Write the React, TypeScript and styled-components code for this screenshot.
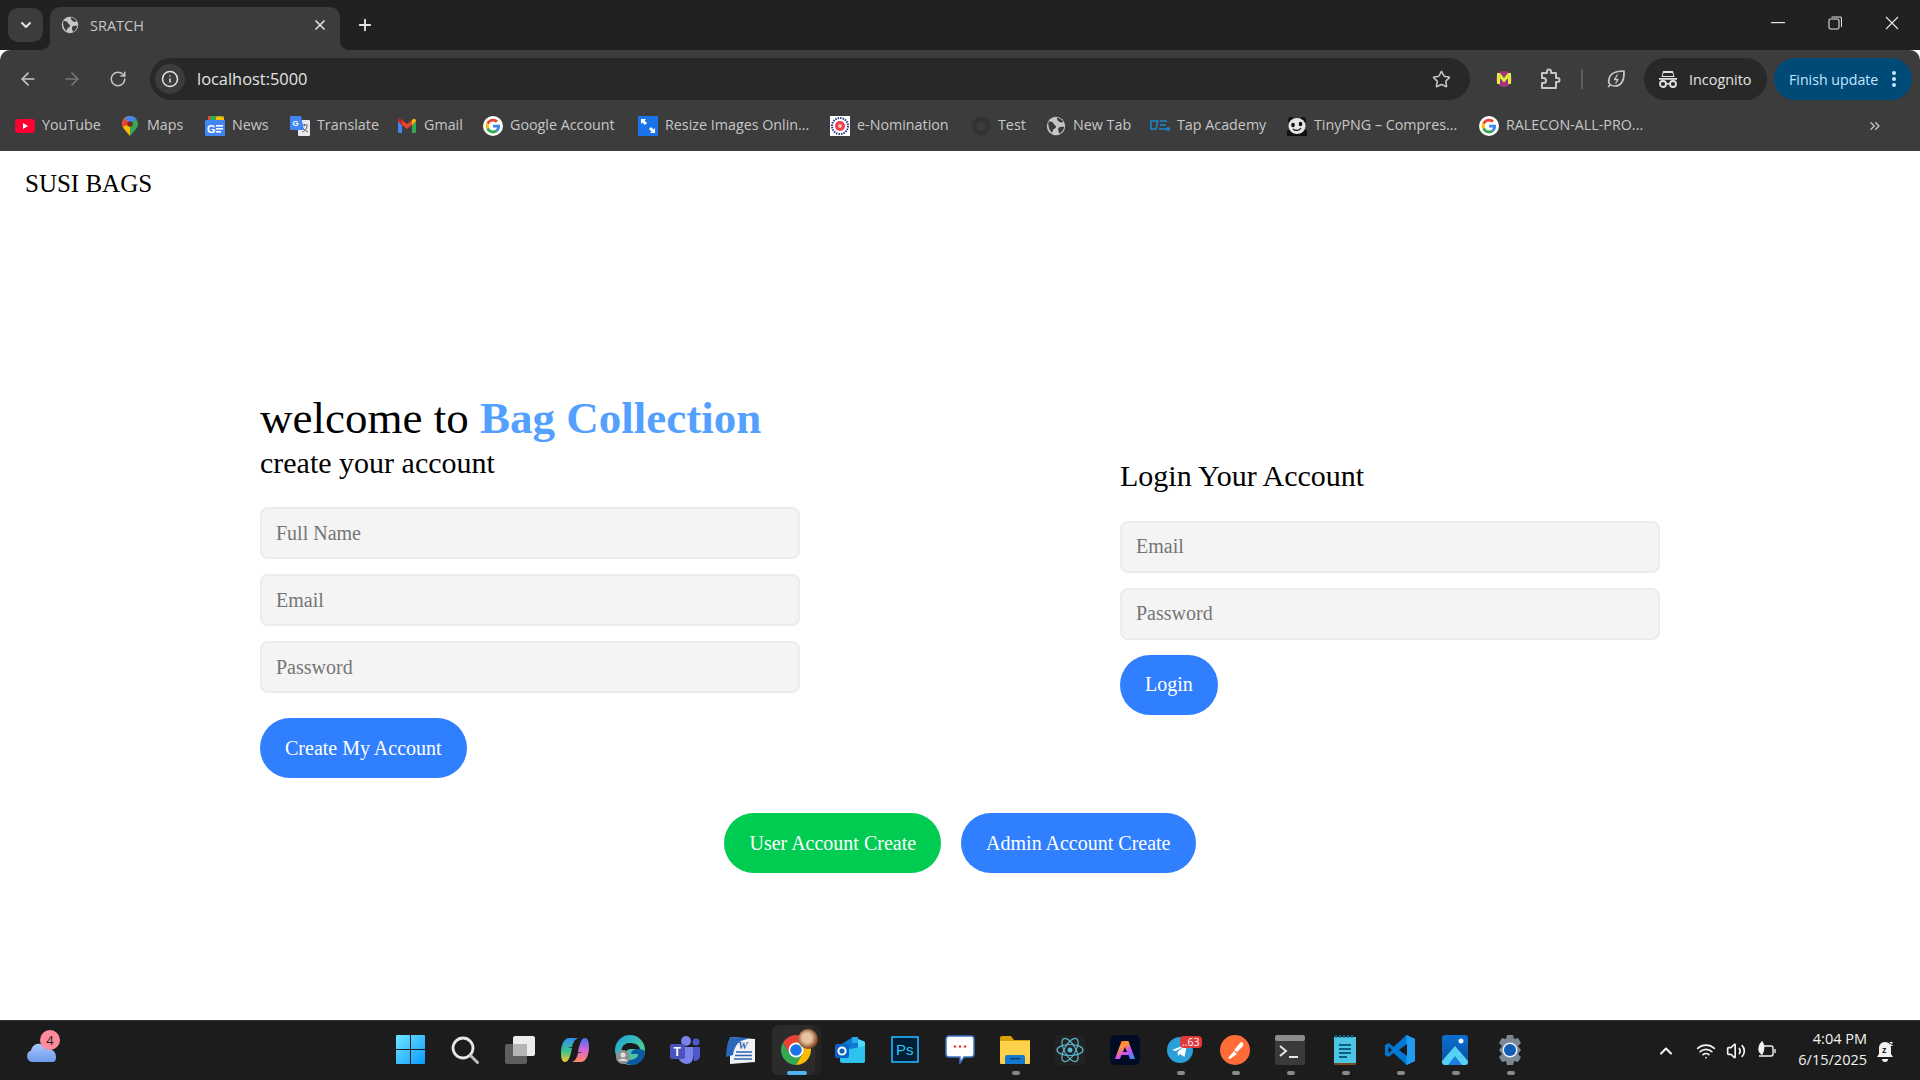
import React from "react";
import styled, { createGlobalStyle } from "styled-components";
import {
  ArrowLeft,
  ArrowRight,
  ChevronDown,
  ChevronUp,
  ChevronsRight,
  Info,
  Plus,
  RotateCw,
  Star,
  Volume2,
  Wifi,
  X,
} from "lucide-react";

const UI_FONT = `"Open Sans", "Noto Sans", sans-serif`;
const PAGE_FONT = `"Liberation Serif", "Times New Roman", serif`;

const GlobalStyle = createGlobalStyle`
  html, body {
    margin: 0;
    padding: 0;
    height: 100%;
    overflow: hidden;
    background: #fff;
  }
  * { box-sizing: border-box; }
`;

/* ---------- drawn icons ---------- */

const GlobeIcon = ({ size = 18, color = "#c4c7c5", land = "#3c3c3c" }: { size?: number; color?: string; land?: string }) => (
  <svg width={size} height={size} viewBox="0 0 24 24">
    <circle cx="12" cy="12" r="11" fill={color} />
    <path d="M3 7c3-1 5 0 6 2s3 2 3 4-2 2-3 3-1 4-2 4C4 17 2 12 3 7z" fill={land} />
    <path d="M13 2c3 0 6 2 8 5-2 1-4 1-5 0s-3-2-3-5zM15 14c2-1 5-1 7-1-1 4-3 7-6 8-1-2-2-5-1-7z" fill={land} />
  </svg>
);

const GoogleIcon = () => (
  <svg width="20" height="20" viewBox="0 0 60 60">
    <circle cx="30" cy="30" r="30" fill="#fff" />
    <g transform="translate(8 8) scale(0.92)">
      <path fill="#EA4335" d="M24 9.5c3.54 0 6.71 1.22 9.21 3.6l6.85-6.85C35.9 2.38 30.47 0 24 0 14.62 0 6.51 5.38 2.56 13.22l7.98 6.19C12.43 13.72 17.74 9.5 24 9.5z" />
      <path fill="#4285F4" d="M46.98 24.55c0-1.57-.15-3.09-.38-4.55H24v9.02h12.94c-.58 2.96-2.26 5.48-4.78 7.18l7.73 6c4.51-4.18 7.09-10.36 7.09-17.65z" />
      <path fill="#FBBC05" d="M10.53 28.59c-.48-1.45-.76-2.99-.76-4.59s.27-3.14.76-4.59l-7.98-6.19C.92 16.46 0 20.12 0 24c0 3.88.92 7.54 2.56 10.78l7.97-6.19z" />
      <path fill="#34A853" d="M24 48c6.48 0 11.93-2.13 15.89-5.81l-7.73-6c-2.15 1.45-4.92 2.3-8.16 2.3-6.26 0-11.57-4.22-13.47-9.91l-7.98 6.19C6.51 42.62 14.62 48 24 48z" />
    </g>
  </svg>
);

const YoutubeIcon = () => (
  <svg width="20" height="14" viewBox="0 0 20 14">
    <rect width="20" height="14" rx="3.5" fill="#ff0033" />
    <path d="M8 4l5 3-5 3z" fill="#fff" />
  </svg>
);

const MapsIcon = () => (
  <svg width="16" height="20" viewBox="0 0 16 20">
    <path d="M8 0a8 8 0 0 1 8 8c0 2-1 3.500-2 5l-6 7z" fill="#34a853" />
    <path d="M8 0a8 8 0 0 0-8 8c0 2 1 3.500 2 5l6 7V0z" fill="#fbbc04" />
    <path d="M2.500 2.500A8 8 0 0 1 8 0c2.500 0 4.500 1 6 3L8 8z" fill="#4285f4" />
    <path d="M2.500 2.500A8 8 0 0 0 0 8c0 1 .3 2 .7 3L8 8z" fill="#ea4335" />
    <circle cx="8" cy="8" r="2.800" fill="#7a2a1a" />
  </svg>
);

const NewsIcon = () => (
  <svg width="20" height="20" viewBox="0 0 20 20">
    <rect x="3" y="0" width="14" height="6" rx="1" fill="#ea4335" />
    <rect x="5" y="0" width="13" height="5" rx="1" fill="#34a853" />
    <rect x="11" y="0.500" width="8" height="5" rx="1" fill="#fbbc04" />
    <rect y="4" width="20" height="16" rx="1" fill="#4285f4" />
    <text x="2" y="16.500" fontFamily="Liberation Sans, sans-serif" fontWeight="700" fontSize="11" fill="#fff">G</text>
    <rect x="11" y="9" width="7" height="1.600" fill="#fff" />
    <rect x="11" y="12" width="7" height="1.600" fill="#fff" />
    <rect x="11" y="15" width="5" height="1.600" fill="#fff" />
  </svg>
);

const TranslateIcon = () => (
  <svg width="20" height="20" viewBox="0 0 20 20">
    <rect x="8" y="4" width="12" height="16" rx="1" fill="#e8eaed" />
    <path d="M11 9h7M14.500 8v2M12.500 16c3-1 4-3 4.500-6M13 12c1 2 3 3 5 4" stroke="#5f6368" strokeWidth="1" fill="none" />
    <path d="M1 0h10l3 14H1a1 1 0 0 1-1-1V1a1 1 0 0 1 1-1z" fill="#4285f4" />
    <text x="2.500" y="10" fontFamily="Liberation Sans, sans-serif" fontWeight="700" fontSize="8" fill="#fff">G</text>
  </svg>
);

const GmailIcon = () => (
  <svg width="18" height="14" viewBox="0 0 18 14">
    <path d="M0 2v10.500A1.500 1.500 0 0 0 1.500 14H4V6z" fill="#4285f4" />
    <path d="M14 6v8h2.500a1.500 1.500 0 0 0 1.500-1.500V2z" fill="#34a853" />
    <path d="M0 2c0-2 2-2.500 3.200-1.500L9 5l5.800-4.500C16-.5 18 0 18 2l-4 4-5 4-5-4z" fill="#ea4335" />
    <path d="M14 .9l.8-.4C16-.5 18 0 18 2l-4 4z" fill="#fbbc04" />
    <path d="M0 2c0-2 2-2.500 3.200-1.500L4 1.100V6z" fill="#c5221f" />
  </svg>
);

const ResizeIcon = () => (
  <svg width="20" height="20" viewBox="0 0 20 20">
    <rect width="20" height="20" fill="#1a73e8" />
    <path d="M3 3h5l-1.500 1.500L9 7 7 9 4.500 6.500 3 8zM17 17h-5l1.500-1.500L11 13l2-2 2.500 2.500L17 12z" fill="#fff" />
  </svg>
);

const NominationIcon = () => (
  <svg width="20" height="20" viewBox="0 0 20 20">
    <rect width="20" height="20" fill="#fff" />
    <circle cx="10" cy="10" r="8" fill="none" stroke="#27348b" strokeWidth="2" strokeDasharray="1.500 1" />
    <circle cx="10" cy="10" r="5" fill="#e8414a" />
    <circle cx="10" cy="10" r="2" fill="#f7b5b5" />
  </svg>
);

const TestIcon = () => (
  <svg width="20" height="20" viewBox="0 0 20 20">
    <circle cx="10" cy="10" r="7" fill="none" stroke="#333" strokeWidth="5" />
  </svg>
);

const TapIcon = () => (
  <svg width="20" height="12" viewBox="0 0 20 12" fill="none" stroke="#1a86d0" strokeWidth="1.600">
    <path d="M1 1h7L6 9H1zM10 1h7M10 5h6M9 9h7" />
    <circle cx="18" cy="9" r="1.300" />
  </svg>
);

const PandaIcon = () => (
  <svg width="20" height="20" viewBox="0 0 20 20">
    <rect y="14" width="20" height="6" fill="#111" />
    <circle cx="4" cy="4" r="3" fill="#111" />
    <circle cx="16" cy="4" r="3" fill="#111" />
    <ellipse cx="10" cy="10" rx="8.500" ry="8" fill="#e6e6e6" />
    <ellipse cx="6" cy="9" rx="1.800" ry="2.200" fill="#111" />
    <ellipse cx="13.500" cy="8" rx="1.800" ry="2.200" fill="#111" />
    <path d="M6 13c2 2 6 2 8-1" stroke="#111" strokeWidth="1.300" fill="none" />
  </svg>
);

const MBadgeIcon = () => (
  <svg width="18" height="18" viewBox="0 0 18 18">
    <circle cx="9" cy="9" r="8" fill="#a8327f" />
    <path d="M2 14V3h3l4 5 4-5h3v11h-3V8l-4 4.500L5 8v6z" fill="#d6f03c" />
  </svg>
);

const PuzzleIcon = () => (
  <svg width="22" height="22" viewBox="0 0 22 22" fill="none" stroke="#c4c7c5" strokeWidth="2" strokeLinejoin="round">
    <path d="M3 5h5V3.500a2 2 0 0 1 4 0V5h5v5h1.500a2 2 0 0 1 0 4H17v6H3v-5h1.500a2.500 2.500 0 0 0 0-5H3z" />
  </svg>
);

const LeafIcon = () => (
  <svg width="20" height="20" viewBox="0 0 20 20" fill="none" stroke="#c4c7c5" strokeWidth="1.700" strokeLinejoin="round">
    <path d="M18 2C18.500 10 16 17 9 17 7 17 5 16.500 4 15.500 2.500 14 2.500 12 3 10 4 4 11 2 18 2Z" />
    <path d="M4 16l-2 2" />
    <path d="M11.500 5.500l-3 5h3.500l-2.500 4" strokeWidth="1.300" />
  </svg>
);

const IncognitoIcon = () => (
  <svg width="20" height="20" viewBox="0 0 20 20" fill="#e3e3e3">
    <path d="M5 2h10l1.500 6h-13zM1 9h18v1.700H1z" />
    <path d="M5.500 4h9l.8 3H4.700z" fill="#282828" />
    <circle cx="5" cy="15" r="3" fill="none" stroke="#e3e3e3" strokeWidth="1.800" />
    <circle cx="15" cy="15" r="3" fill="none" stroke="#e3e3e3" strokeWidth="1.800" />
    <rect x="7.500" y="14" width="5" height="1.600" />
  </svg>
);

const MinimizeIcon = () => (
  <svg width="14" height="2" viewBox="0 0 14 2">
    <rect width="14" height="1.200" fill="#e3e3e3" />
  </svg>
);

const RestoreIcon = () => (
  <svg width="14" height="14" viewBox="0 0 14 14" fill="none" stroke="#e3e3e3" strokeWidth="1.100">
    <rect x="1" y="3" width="10" height="10" rx="1.500" />
    <path d="M3.500 1H12a1.500 1.500 0 0 1 1.500 1.500V11" />
  </svg>
);

const CloseIcon = () => (
  <svg width="14" height="14" viewBox="0 0 14 14" stroke="#e3e3e3" strokeWidth="1.200">
    <path d="M1 1l12 12M13 1L1 13" />
  </svg>
);

const MoreIcon = () => (
  <svg width="4" height="18" viewBox="0 0 4 18" fill="#c2e7ff">
    <circle cx="2" cy="3" r="2" />
    <circle cx="2" cy="9" r="2" />
    <circle cx="2" cy="15" r="2" />
  </svg>
);

/* taskbar */

const CloudIcon = () => (
  <svg width="30" height="20" viewBox="0 0 30 20">
    <defs>
      <linearGradient id="cloud" x1="0" y1="0" x2="0" y2="1">
        <stop offset="0" stopColor="#a8c8ff" />
        <stop offset="1" stopColor="#6d9aea" />
      </linearGradient>
    </defs>
    <path d="M6 20a6 6 0 0 1-1-11.500C6 4 10 1 14 2c3 .7 5 3 6 5 5-1 10 2 10 8 0 3-1 5-3 5z" fill="url(#cloud)" />
  </svg>
);

const WindowsIcon = () => (
  <svg width="29" height="29" viewBox="0 0 29 29">
    <defs>
      <linearGradient id="win" x1="0" y1="0" x2="1" y2="1">
        <stop offset="0" stopColor="#6fe6ff" />
        <stop offset="1" stopColor="#0a9bff" />
      </linearGradient>
    </defs>
    <path d="M0 1a1 1 0 0 1 1-1h13v14H0zM15 0h13a1 1 0 0 1 1 1v13H15zM0 15h14v14H1a1 1 0 0 1-1-1zM15 15h14v13a1 1 0 0 1-1 1H15z" fill="url(#win)" />
  </svg>
);

const SearchIcon = () => (
  <svg width="28" height="28" viewBox="0 0 28 28" fill="none" stroke="#e6e6e6" strokeLinecap="round">
    <circle cx="12" cy="12" r="10" strokeWidth="2.800" />
    <path d="M20 20l6.500 6.500" strokeWidth="3" stroke="#bdbdbd" />
  </svg>
);

const TaskViewIcon = () => (
  <svg width="30" height="28" viewBox="0 0 30 28">
    <rect y="8" width="22" height="20" rx="2" fill="#5e5e5e" />
    <rect x="8" width="22" height="20" rx="2" fill="#ececec" />
    <rect x="8" y="8" width="14" height="12" fill="#b5b5b5" />
  </svg>
);

const CopilotIcon = () => (
  <svg width="28" height="26" viewBox="0 0 28 26">
    <defs>
      <linearGradient id="copA" x1="0" y1="0" x2="0" y2="1">
        <stop offset="0" stopColor="#2f8cf5" />
        <stop offset="0.550" stopColor="#3cc28a" />
        <stop offset="1" stopColor="#f8c92e" />
      </linearGradient>
      <linearGradient id="copB" x1="0" y1="0" x2="0" y2="1">
        <stop offset="0" stopColor="#3f76f0" />
        <stop offset="0.500" stopColor="#d665d8" />
        <stop offset="1" stopColor="#ff8a5c" />
      </linearGradient>
    </defs>
    <path d="M8 1h9c-3 1-5 4-6 9H6l5 1c-1 6-3 14-7 14-3 0-4-4-4-9C0 8 3 1 8 1z" fill="url(#copA)" />
    <path d="M20 25h-9c3-1 5-4 6-9h5l-5-1c1-6 3-14 7-14 3 0 4 4 4 9 0 8-3 15-8 15z" fill="url(#copB)" />
  </svg>
);

const EdgeIcon = () => (
  <svg width="30" height="30" viewBox="0 0 30 30">
    <defs>
      <linearGradient id="edgeA" x1="0" y1="0" x2="1" y2="1">
        <stop offset="0" stopColor="#1da0e0" />
        <stop offset="1" stopColor="#5fe07a" />
      </linearGradient>
    </defs>
    <circle cx="15" cy="15" r="15" fill="url(#edgeA)" />
    <path d="M30 17c0 7-6 13-13 13-5 0-9-3-10-7 3 2 8 3 12 1 3-1 4-3 4-5h-7c0-3 3-5 7-5s7 1 7 3z" fill="#0c59a4" />
    <path d="M15 8c5 0 9 2 10 6h-9c-4 0-6 3-6 6-3-2-4-5-3-7 1-3 4-5 8-5z" fill="#1b1b1b" />
    <circle cx="8" cy="22" r="7" fill="#8f8f8f" />
    <circle cx="8" cy="20" r="2.500" fill="#e0e0e0" />
    <path d="M3.500 26c1-3 8-3 9 0z" fill="#e0e0e0" />
  </svg>
);

const TeamsIcon = () => (
  <svg width="30" height="28" viewBox="0 0 30 28">
    <circle cx="16" cy="5" r="5" fill="#7b83eb" />
    <circle cx="26" cy="6" r="3.500" fill="#5059c9" />
    <path d="M22 11h8v9c0 3-3 5-6 5z" fill="#5059c9" />
    <path d="M8 11h15v11a6 6 0 0 1-6 6c-5 0-9-4-9-8z" fill="#7b83eb" />
    <rect y="8" width="15" height="15" rx="2" fill="#4b53bc" />
    <text x="3.500" y="20" fontFamily="Liberation Sans, sans-serif" fontWeight="700" fontSize="12" fill="#fff">T</text>
  </svg>
);

const WordIcon = () => (
  <svg width="29" height="28" viewBox="0 0 29 28">
    <path d="M4 1l25 2v23L4 28z" fill="#f2f2f2" />
    <path d="M4 1c-3 6-4 14-4 20l7-2c1-6 3-11 8-14l9-3z" fill="#2b66b8" />
    <text x="12" y="13" fontFamily="Liberation Serif, serif" fontStyle="italic" fontWeight="700" fontSize="11" fill="#2b66b8">W</text>
    <path d="M10 16h16M9 19.500h17M8 23h18" stroke="#2b66b8" strokeWidth="1.400" />
  </svg>
);

const ChromeIcon = () => (
  <svg width="30" height="30" viewBox="2 2 44 44">
    <path fill="#ea4335" d="M24 13H43.050A22 22 0 0 0 4.950 13L14.470 29.500L24 24Z" />
    <path fill="#34a853" d="M14.470 29.500L4.950 13A22 22 0 0 0 24 46L33.530 29.500L24 24Z" />
    <path fill="#fbbc04" d="M33.530 29.500L24 46A22 22 0 0 0 43.050 13H24L24 24Z" />
    <circle cx="24" cy="24" r="11" fill="#fff" />
    <circle cx="24" cy="24" r="8.500" fill="#1a73e8" />
  </svg>
);

const OutlookIcon = () => (
  <svg width="30" height="26" viewBox="0 0 30 26">
    <path d="M5 8l13-8 10 4a2 2 0 0 1 2 2v18a2 2 0 0 1-2 2H8a2 2 0 0 1-3-2z" fill="#0f78d4" />
    <path d="M17 0h6v6h-6z" fill="#28a8ea" />
    <path d="M23 2l5 2a2 2 0 0 1 2 2v5h-7z" fill="#50d9ff" />
    <path d="M5 14l25-5v15a2 2 0 0 1-2 2H8a3 3 0 0 1-3-2z" fill="#2cc4ee" />
    <rect y="7" width="14" height="14" rx="2" fill="#0a64c8" />
    <circle cx="7" cy="14" r="3.600" fill="none" stroke="#fff" strokeWidth="2" />
  </svg>
);

const PhotoshopIcon = () => (
  <svg width="28" height="27" viewBox="0 0 28 27">
    <rect x="1" y="1" width="26" height="25" fill="#001e36" stroke="#1fb6ff" strokeWidth="1.600" />
    <text x="5" y="19" fontFamily="Liberation Sans, sans-serif" fontSize="15" fill="#31c5f4">Ps</text>
  </svg>
);

const FeedbackIcon = () => (
  <svg width="30" height="29" viewBox="0 0 30 29">
    <path d="M4 1h22a3 3 0 0 1 3 3v15a3 3 0 0 1-3 3h-7l-4 6v-6H4a3 3 0 0 1-3-3V4a3 3 0 0 1 3-3z" fill="#fff" stroke="#3a76c4" strokeWidth="1.500" />
    <circle cx="10" cy="11.500" r="1.300" fill="#e23b3b" />
    <circle cx="15" cy="11.500" r="1.300" fill="#e23b3b" />
    <circle cx="20" cy="11.500" r="1.300" fill="#e23b3b" />
  </svg>
);

const FolderIcon = () => (
  <svg width="30" height="28" viewBox="0 0 30 28">
    <path d="M0 2a2 2 0 0 1 2-2h9l3 4h16v4H0z" fill="#d9a107" />
    <path d="M0 5h30v22a1 1 0 0 1-1 1H1a1 1 0 0 1-1-1z" fill="#fdd24b" />
    <path d="M5 21a2 2 0 0 1 2-2h16a2 2 0 0 1 2 2v7H5z" fill="#1578d1" />
    <rect x="10" y="22" width="10" height="1.400" fill="#0a3f75" />
  </svg>
);

const ReactIcon = () => (
  <svg width="30" height="30" viewBox="0 0 30 30">
    <rect width="30" height="30" rx="3" fill="#222" />
    <g fill="none" stroke="#5bb8cf" strokeWidth="1.200">
      <ellipse cx="15" cy="15" rx="13" ry="5.500" />
      <ellipse cx="15" cy="15" rx="13" ry="5.500" transform="rotate(60 15 15)" />
      <ellipse cx="15" cy="15" rx="13" ry="5.500" transform="rotate(120 15 15)" />
    </g>
    <circle cx="15" cy="15" r="2.500" fill="#5bb8cf" />
  </svg>
);

const AdobeIcon = () => (
  <svg width="30" height="30" viewBox="0 0 30 30">
    <defs>
      <linearGradient id="adobe" x1="0" y1="0" x2="0.800" y2="1">
        <stop offset="0" stopColor="#ff3b3b" />
        <stop offset="0.350" stopColor="#ff9a2e" />
        <stop offset="0.650" stopColor="#d94cf0" />
        <stop offset="1" stopColor="#3c8cf5" />
      </linearGradient>
    </defs>
    <rect width="30" height="30" rx="5" fill="#000c24" />
    <path d="M11.500 6h7l6.500 18h-5l-1.500-4h-7l-1.500 4H5zM15 12l-2 5h4z" fill="url(#adobe)" fillRule="evenodd" />
  </svg>
);

const TelegramIcon = () => (
  <svg width="26" height="26" viewBox="0 0 26 26">
    <circle cx="13" cy="13" r="13" fill="#2a9fd8" />
    <path d="M5 13l15-6-2.500 13-4.500-3-2 2-.5-4 6-5-8 4z" fill="#fff" />
  </svg>
);

const PostmanIcon = () => (
  <svg width="30" height="30" viewBox="0 0 30 30">
    <circle cx="15" cy="15" r="15" fill="#ff6c37" />
    <path d="M8 23l6-7 3 3-7 5zM14 15l7-8c2 0 3 2 2 4l-6 6z" fill="#fff" />
  </svg>
);

const TerminalIcon = () => (
  <svg width="30" height="30" viewBox="0 0 30 30">
    <rect width="30" height="30" rx="3" fill="#3a3a3a" />
    <rect width="30" height="6" rx="2" fill="#8c8c8c" />
    <path d="M5 11l6 5-6 5" fill="none" stroke="#e6e6e6" strokeWidth="2" />
    <rect x="14" y="21" width="9" height="2" fill="#e6e6e6" />
  </svg>
);

const NotepadIcon = () => (
  <svg width="22" height="30" viewBox="0 0 22 30">
    <rect y="2" width="22" height="28" rx="1" fill="#7a4a22" />
    <rect y="2" width="22" height="26" fill="#4dc6e6" />
    <path d="M2 0v3M6 0v3M10 0v3M14 0v3M18 0v3" stroke="#0f7fa8" strokeWidth="1.500" />
    <path d="M5 10h12M5 14h12M5 18h12M5 22h8" stroke="#0b5f80" strokeWidth="2" />
  </svg>
);

const VsCodeIcon = () => (
  <svg width="30" height="30" viewBox="0 0 30 30">
    <path d="M21.500 0L30 4v22l-8.500 4-13-12-5 4L0 20v-10l3.500-2 5 4z" fill="#0078d4" />
    <path d="M21.500 0L30 4v22l-8.500 4z" fill="#1f9cf0" />
    <path d="M22 9l-8 6 8 6z" fill="#1b1b1b" />
    <path d="M3.500 11.500v7L7 15z" fill="#1b1b1b" />
  </svg>
);

const PhotosIcon = () => (
  <svg width="26" height="30" viewBox="0 0 26 30">
    <defs>
      <linearGradient id="photos" x1="0" y1="0" x2="0" y2="1">
        <stop offset="0" stopColor="#0c6fd0" />
        <stop offset="1" stopColor="#0a4d9c" />
      </linearGradient>
    </defs>
    <rect width="26" height="30" rx="3" fill="url(#photos)" />
    <circle cx="19" cy="6" r="2.500" fill="#e8f4ff" />
    <path d="M0 26l13-15 13 15v1a3 3 0 0 1-3 3H3a3 3 0 0 1-3-3z" fill="#57d0f5" />
    <path d="M6 30l7-9 7 9z" fill="#1a7fdc" />
  </svg>
);

const SettingsIcon = () => (
  <svg width="30" height="30" viewBox="0 0 30 30">
    <path d="M12 0h6l1 4 4-1 3 5-3 3 3 4-3 4 3 3-3 5-4-1-1 4h-6l-1-4-4 1-3-5 3-3-3-4 3-4-3-3 3-5 4 1z" fill="#7c8893" />
    <circle cx="15" cy="15" r="7.500" fill="#e8eef5" />
    <circle cx="15" cy="15" r="6" fill="#0f5cb5" />
  </svg>
);

const BatteryLeafIcon = () => (
  <svg width="20" height="20" viewBox="0 0 20 20" fill="none" stroke="#f2f2f2" strokeWidth="1.400">
    <path d="M8 5h7a2 2 0 0 1 2 2v6a2 2 0 0 1-2 2H3" />
    <path d="M19 8v4" />
    <path d="M6 1c2 3 3 6 0 12C2 11 2 5 6 1z" fill="#f2f2f2" />
  </svg>
);

const BellIcon = () => (
  <svg width="20" height="24" viewBox="0 0 20 24">
    <path d="M9 3c-4 0-6 3-6 6v6l-2 3h16l-2-3V9c0-3-2-6-6-6z" fill="#f2f2f2" />
    <path d="M6 20h6a3 3 0 0 1-6 0z" fill="#f2f2f2" />
    <text x="6" y="14" fontFamily="Liberation Sans, sans-serif" fontWeight="700" fontSize="9" fill="#1c1c1c">z</text>
    <text x="13" y="7" fontFamily="Liberation Sans, sans-serif" fontWeight="700" fontSize="8" fill="#f2f2f2">z</text>
  </svg>
);

/* ---------- data ---------- */

const bookmarks = [
  { label: "YouTube", width: 56, icon: <YoutubeIcon /> },
  { label: "Maps", width: 36, icon: <MapsIcon /> },
  { label: "News", width: 36, icon: <NewsIcon /> },
  { label: "Translate", width: 58, icon: <TranslateIcon /> },
  { label: "Gmail", width: 37, icon: <GmailIcon /> },
  { label: "Google Account", width: 106, icon: <GoogleIcon /> },
  { label: "Resize Images Onlin...", width: 143, icon: <ResizeIcon /> },
  { label: "e-Nomination", width: 92, icon: <NominationIcon /> },
  { label: "Test", width: 26, icon: <TestIcon /> },
  { label: "New Tab", width: 55, icon: <GlobeIcon size={20} /> },
  { label: "Tap Academy", width: 88, icon: <TapIcon /> },
  { label: "TinyPNG – Compres...", width: 143, icon: <PandaIcon /> },
  { label: "RALECON-ALL-PRO...", width: 141, icon: <GoogleIcon /> },
];

const taskbarApps = [
  { id: "start", icon: <WindowsIcon /> },
  { id: "search", icon: <SearchIcon /> },
  { id: "taskview", icon: <TaskViewIcon /> },
  { id: "copilot", icon: <CopilotIcon /> },
  { id: "edge", icon: <EdgeIcon /> },
  { id: "teams", icon: <TeamsIcon /> },
  { id: "word", icon: <WordIcon /> },
  { id: "chrome", icon: <ChromeIcon />, active: true },
  { id: "outlook", icon: <OutlookIcon /> },
  { id: "photoshop", icon: <PhotoshopIcon /> },
  { id: "feedback", icon: <FeedbackIcon /> },
  { id: "files", icon: <FolderIcon />, running: true },
  { id: "react", icon: <ReactIcon /> },
  { id: "adobe", icon: <AdobeIcon /> },
  { id: "telegram", icon: <TelegramIcon />, running: true, badge: "..63" },
  { id: "postman", icon: <PostmanIcon />, running: true },
  { id: "terminal", icon: <TerminalIcon />, running: true },
  { id: "notepad", icon: <NotepadIcon />, running: true },
  { id: "vscode", icon: <VsCodeIcon />, running: true },
  { id: "photos", icon: <PhotosIcon />, running: true },
  { id: "settings", icon: <SettingsIcon />, running: true },
];

/* ---------- app ---------- */

const App: React.FC = () => (
  <>
    <GlobalStyle />
    <Screen>
      <TabStrip>
        <TabSwitcher>
          <ChevronDown size={16} strokeWidth={3} color="#e3e3e3" />
        </TabSwitcher>
        <Tab>
          <GlobeIcon />
          <TabTitle>SRATCH</TabTitle>
          <X size={16} strokeWidth={2.5} color="#e3e3e3" />
        </Tab>
        <NewTab>
          <Plus size={18} strokeWidth={2.5} color="#e3e3e3" />
        </NewTab>
        <WindowControls>
          <WindowButton><MinimizeIcon /></WindowButton>
          <WindowButton><RestoreIcon /></WindowButton>
          <WindowButton><CloseIcon /></WindowButton>
        </WindowControls>
      </TabStrip>

      <Toolbar>
        <NavButton><ArrowLeft size={20} color="#c4c7c5" /></NavButton>
        <NavButton><ArrowRight size={20} color="#757575" /></NavButton>
        <NavButton $shift><RotateCw size={18} color="#c4c7c5" /></NavButton>
        <Omnibox>
          <SiteInfo><Info size={18} color="#e3e3e3" /></SiteInfo>
          <Address>localhost:5000</Address>
          <Star size={19} color="#c4c7c5" />
        </Omnibox>
        <ToolSlot $lead><MBadgeIcon /></ToolSlot>
        <ToolSlot><PuzzleIcon /></ToolSlot>
        <ToolDivider />
        <ToolSlot><LeafIcon /></ToolSlot>
        <IncognitoChip>
          <IncognitoIcon />
          Incognito
        </IncognitoChip>
        <UpdateChip>
          Finish update
          <MoreIcon />
        </UpdateChip>
      </Toolbar>

      <BookmarksBar>
        {bookmarks.map((b) => (
          <Bookmark key={b.label}>
            <BookmarkIcon>{b.icon}</BookmarkIcon>
            <BookmarkLabel $width={b.width}>{b.label}</BookmarkLabel>
          </Bookmark>
        ))}
        <BookmarksMore>
          <ChevronsRight size={16} color="#c4c7c5" />
        </BookmarksMore>
      </BookmarksBar>

      <Main>
        <Brand>SUSI BAGS</Brand>
        <Forms>
          <FormColumn>
            <Welcome>
              welcome to <Accent>Bag Collection</Accent>
            </Welcome>
            <SubHeading $gap={27}>create your account</SubHeading>
            <FormFields>
              <TextInput type="text" placeholder="Full Name" />
              <TextInput type="email" placeholder="Email" />
              <TextInput type="password" placeholder="Password" />
              <PillButton $spaced>Create My Account</PillButton>
            </FormFields>
          </FormColumn>
          <FormColumn $nudge>
            <SubHeading $gap={28}>Login Your Account</SubHeading>
            <FormFields>
              <TextInput type="email" placeholder="Email" />
              <TextInput type="password" placeholder="Password" />
              <PillButton>Login</PillButton>
            </FormFields>
          </FormColumn>
        </Forms>
        <RoleSwitch>
          <PillButton $green>User Account Create</PillButton>
          <PillButton>Admin Account Create</PillButton>
        </RoleSwitch>
      </Main>

      <Taskbar>
        <Widgets>
          <CloudIcon />
          <WidgetBadge>4</WidgetBadge>
        </Widgets>
        <AppRow>
          {taskbarApps.map((app) => (
            <AppSlot key={app.id} $active={app.active}>
              {app.icon}
              {app.active && <ProfilePhoto />}
              {app.badge && <AppBadge>{app.badge}</AppBadge>}
              {app.active && <ActiveBar />}
              {app.running && <RunningDot />}
            </AppSlot>
          ))}
        </AppRow>
        <Tray>
          <TraySlot $first><ChevronUp size={20} strokeWidth={2.5} color="#f2f2f2" /></TraySlot>
          <TraySlot><Wifi size={20} color="#f2f2f2" /></TraySlot>
          <TraySlot><Volume2 size={20} color="#f2f2f2" /></TraySlot>
          <TraySlot><BatteryLeafIcon /></TraySlot>
          <Clock>
            <span>4:04 PM</span>
            <span>6/15/2025</span>
          </Clock>
          <BellIcon />
        </Tray>
      </Taskbar>
    </Screen>
  </>
);

/* ---------- browser chrome ---------- */

const Screen = styled.div`
  width: 1920px;
  height: 1080px;
  display: flex;
  flex-direction: column;
  overflow: hidden;
  font-family: ${UI_FONT};
`;

const TabStrip = styled.div`
  height: 50px;
  flex: none;
  display: flex;
  align-items: flex-end;
  background: #202221;
`;

const TabSwitcher = styled.div`
  width: 35px;
  height: 34px;
  margin: 0 7px 8px 8px;
  display: flex;
  align-items: center;
  justify-content: center;
  background: #3c3c3c;
  border-radius: 10px;
`;

const Tab = styled.div`
  position: relative;
  width: 290px;
  height: 43px;
  padding: 0 12px 7px 11px;
  display: flex;
  align-items: center;
  gap: 11px;
  background: #3c3c3c;
  border-radius: 10px 10px 0 0;
  color: #c7c7c7;
  font-size: 14.5px;

  &::before,
  &::after {
    content: "";
    position: absolute;
    bottom: 0;
    width: 10px;
    height: 10px;
  }
  &::before {
    left: -10px;
    background: radial-gradient(circle at 0 0, #202221 10px, #3c3c3c 10.5px);
  }
  &::after {
    right: -10px;
    background: radial-gradient(circle at 100% 0, #202221 10px, #3c3c3c 10.5px);
  }
`;

const TabTitle = styled.span`
  flex: 1;
`;

const NewTab = styled.div`
  width: 30px;
  height: 30px;
  margin: 0 0 10px 10px;
  display: flex;
  align-items: center;
  justify-content: center;
`;

const WindowControls = styled.div`
  margin-left: auto;
  height: 50px;
  display: flex;
  align-items: center;
  padding-bottom: 4px;
`;

const WindowButton = styled.div`
  width: 57px;
  display: flex;
  justify-content: center;
`;

const Toolbar = styled.div`
  height: 50px;
  flex: none;
  display: flex;
  align-items: center;
  padding: 8px 8px 0 6px;
  background: #3c3c3c;
  border-radius: 10px 10px 0 0;
`;

const NavButton = styled.div<{ $shift?: boolean }>`
  width: 44px;
  display: flex;
  justify-content: center;
  margin-left: ${(p) => (p.$shift ? "2px" : "0")};
`;

const Omnibox = styled.div`
  width: 1320px;
  height: 42px;
  margin-left: 10px;
  padding: 0 19px 0 5px;
  display: flex;
  align-items: center;
  background: #282828;
  border-radius: 21px;
`;

const SiteInfo = styled.div`
  width: 30px;
  height: 30px;
  display: flex;
  align-items: center;
  justify-content: center;
  background: #3c3c3c;
  border-radius: 50%;
`;

const Address = styled.div`
  flex: 1;
  margin-left: 12px;
  margin-bottom: 1px;
  color: #e3e3e3;
  font-size: 16.4px;
`;

const ToolSlot = styled.div<{ $lead?: boolean }>`
  width: 46px;
  display: flex;
  justify-content: center;
  margin-left: ${(p) => (p.$lead ? "11px" : "0")};
`;

const ToolDivider = styled.div`
  width: 2px;
  height: 20px;
  margin-left: 8px;
  margin-right: 10px;
  background: #5e5e5e;
`;

const IncognitoChip = styled.div`
  width: 123px;
  height: 42px;
  margin-left: 5px;
  padding-left: 14px;
  display: flex;
  align-items: center;
  gap: 11px;
  background: #282828;
  border-radius: 21px;
  color: #e3e3e3;
  font-size: 14.4px;
`;

const UpdateChip = styled.div`
  width: 138px;
  height: 42px;
  margin-left: 7px;
  padding: 0 16px 0 15px;
  display: flex;
  align-items: center;
  justify-content: space-between;
  background: #004a77;
  border-radius: 21px;
  color: #c2e7ff;
  font-size: 14.2px;
`;

const BookmarksBar = styled.div`
  height: 51px;
  flex: none;
  display: flex;
  align-items: center;
  gap: 21px;
  padding-left: 15px;
  background: #3c3c3c;
`;

const Bookmark = styled.div`
  display: flex;
  align-items: center;
  gap: 7px;
`;

const BookmarkIcon = styled.div`
  width: 20px;
  height: 20px;
  display: flex;
  align-items: center;
  justify-content: center;
`;

const BookmarkLabel = styled.span<{ $width: number }>`
  width: ${(p) => p.$width + 1}px;
  margin-bottom: 2px;
  white-space: nowrap;
  color: #c7c7c7;
  font-size: 14.3px;
`;

const BookmarksMore = styled.div`
  margin-left: auto;
  margin-right: 37px;
  display: flex;
`;

/* ---------- page ---------- */

const Main = styled.main`
  flex: 1;
  display: flex;
  flex-direction: column;
  background: #fff;
  color: #000;
  font-family: ${PAGE_FONT};
`;

const Brand = styled.div`
  padding: 19px 25px 0;
  font-size: 25px;
  line-height: 28px;
`;

const Forms = styled.div`
  margin-top: 195px;
  padding: 0 260px;
  display: flex;
  justify-content: space-between;
  align-items: center;
`;

const FormColumn = styled.section<{ $nudge?: boolean }>`
  width: 540px;
  margin-top: ${(p) => (p.$nudge ? "1px" : "0")};
`;

const Welcome = styled.h1`
  margin: 0 0 2px;
  font-size: 45px;
  font-weight: 400;
  line-height: 50px;
`;

const Accent = styled.span`
  color: #54a0ff;
  font-weight: 700;
`;

const SubHeading = styled.h3<{ $gap: number }>`
  margin: 0 0 ${(p) => p.$gap}px;
  font-size: 30px;
  font-weight: 400;
  line-height: 35px;
`;

const FormFields = styled.form`
  display: flex;
  flex-direction: column;
  align-items: flex-start;
  gap: 15px;
`;

const TextInput = styled.input`
  width: 100%;
  height: 52px;
  padding: 0 14px;
  background: #f4f4f4;
  border: 2px solid #ececec;
  border-radius: 8px;
  outline: none;
  color: #000;
  font-family: ${PAGE_FONT};
  font-size: 20px;

  &::placeholder {
    color: #757575;
    opacity: 1;
  }
`;

const PillButton = styled.button<{ $green?: boolean; $spaced?: boolean }>`
  height: 60px;
  margin-top: ${(p) => (p.$spaced ? "10px" : "0")};
  padding: 0 25px;
  border: none;
  border-radius: 30px;
  background: ${(p) => (p.$green ? "#00cc52" : "#2f7fff")};
  color: #fff;
  font-family: ${PAGE_FONT};
  font-size: 20px;
`;

const RoleSwitch = styled.div`
  margin-top: 35px;
  display: flex;
  justify-content: center;
  gap: 20px;
`;

/* ---------- taskbar ---------- */

const Taskbar = styled.footer`
  height: 60px;
  flex: none;
  display: grid;
  grid-template-columns: 1fr auto 1fr;
  align-items: center;
  background: #1c1c1c;
  border-top: 1px solid #333;
`;

const Widgets = styled.div`
  position: relative;
  width: 30px;
  height: 20px;
  margin: 2px 0 0 26px;
  display: flex;
`;

const WidgetBadge = styled.div`
  position: absolute;
  top: -12px;
  left: 14px;
  width: 20px;
  height: 20px;
  display: flex;
  align-items: center;
  justify-content: center;
  background: #ff8a9b;
  border-radius: 50%;
  color: #1c1c1c;
  font-family: ${UI_FONT};
  font-size: 13px;
`;

const AppRow = styled.div`
  display: flex;
`;

const AppSlot = styled.div<{ $active?: boolean }>`
  position: relative;
  width: 55px;
  height: 59px;
  padding-bottom: 2px;
  display: flex;
  align-items: center;
  justify-content: center;

  ${(p) =>
    p.$active &&
    `
    &::before {
      content: "";
      position: absolute;
      top: 4px;
      left: 4px;
      width: 43px;
      height: 50px;
      background: #2b2b2b;
      border-radius: 6px;
      box-shadow: 6px 0 0 #242424;
    }
    & > svg { position: relative; left: 1px; }
  `}
`;

const ProfilePhoto = styled.div`
  position: absolute;
  top: 8px;
  right: 5px;
  width: 20px;
  height: 20px;
  border-radius: 50%;
  background: radial-gradient(circle at 45% 45%, #e8c3a0 0 30%, #7a3f1c 70%, #c9a183 100%);
`;

const AppBadge = styled.div`
  position: absolute;
  top: 15px;
  right: 6px;
  padding: 0 2px;
  height: 12px;
  display: flex;
  align-items: center;
  background: #e5383b;
  border-radius: 4px;
  color: #fff;
  font-family: ${UI_FONT};
  font-size: 10.5px;
`;

const ActiveBar = styled.div`
  position: absolute;
  bottom: 5px;
  left: 19px;
  width: 20px;
  height: 4px;
  background: #4fb4f0;
  border-radius: 2px;
`;

const RunningDot = styled.div`
  position: absolute;
  bottom: 5px;
  left: 24px;
  width: 8px;
  height: 4px;
  background: #8a8a8a;
  border-radius: 2px;
`;

const Tray = styled.div`
  display: flex;
  justify-content: flex-end;
  align-items: center;
  padding-right: 24px;
`;

const TraySlot = styled.div<{ $first?: boolean }>`
  width: 30px;
  display: flex;
  justify-content: center;
  margin-right: ${(p) => (p.$first ? "10px" : "0")};
`;

const Clock = styled.div`
  width: 86px;
  margin-right: 9px;
  margin-bottom: 3px;
  display: flex;
  flex-direction: column;
  align-items: flex-end;
  color: #f2f2f2;
  font-size: 14.5px;
  line-height: 21px;
`;

export default App;
